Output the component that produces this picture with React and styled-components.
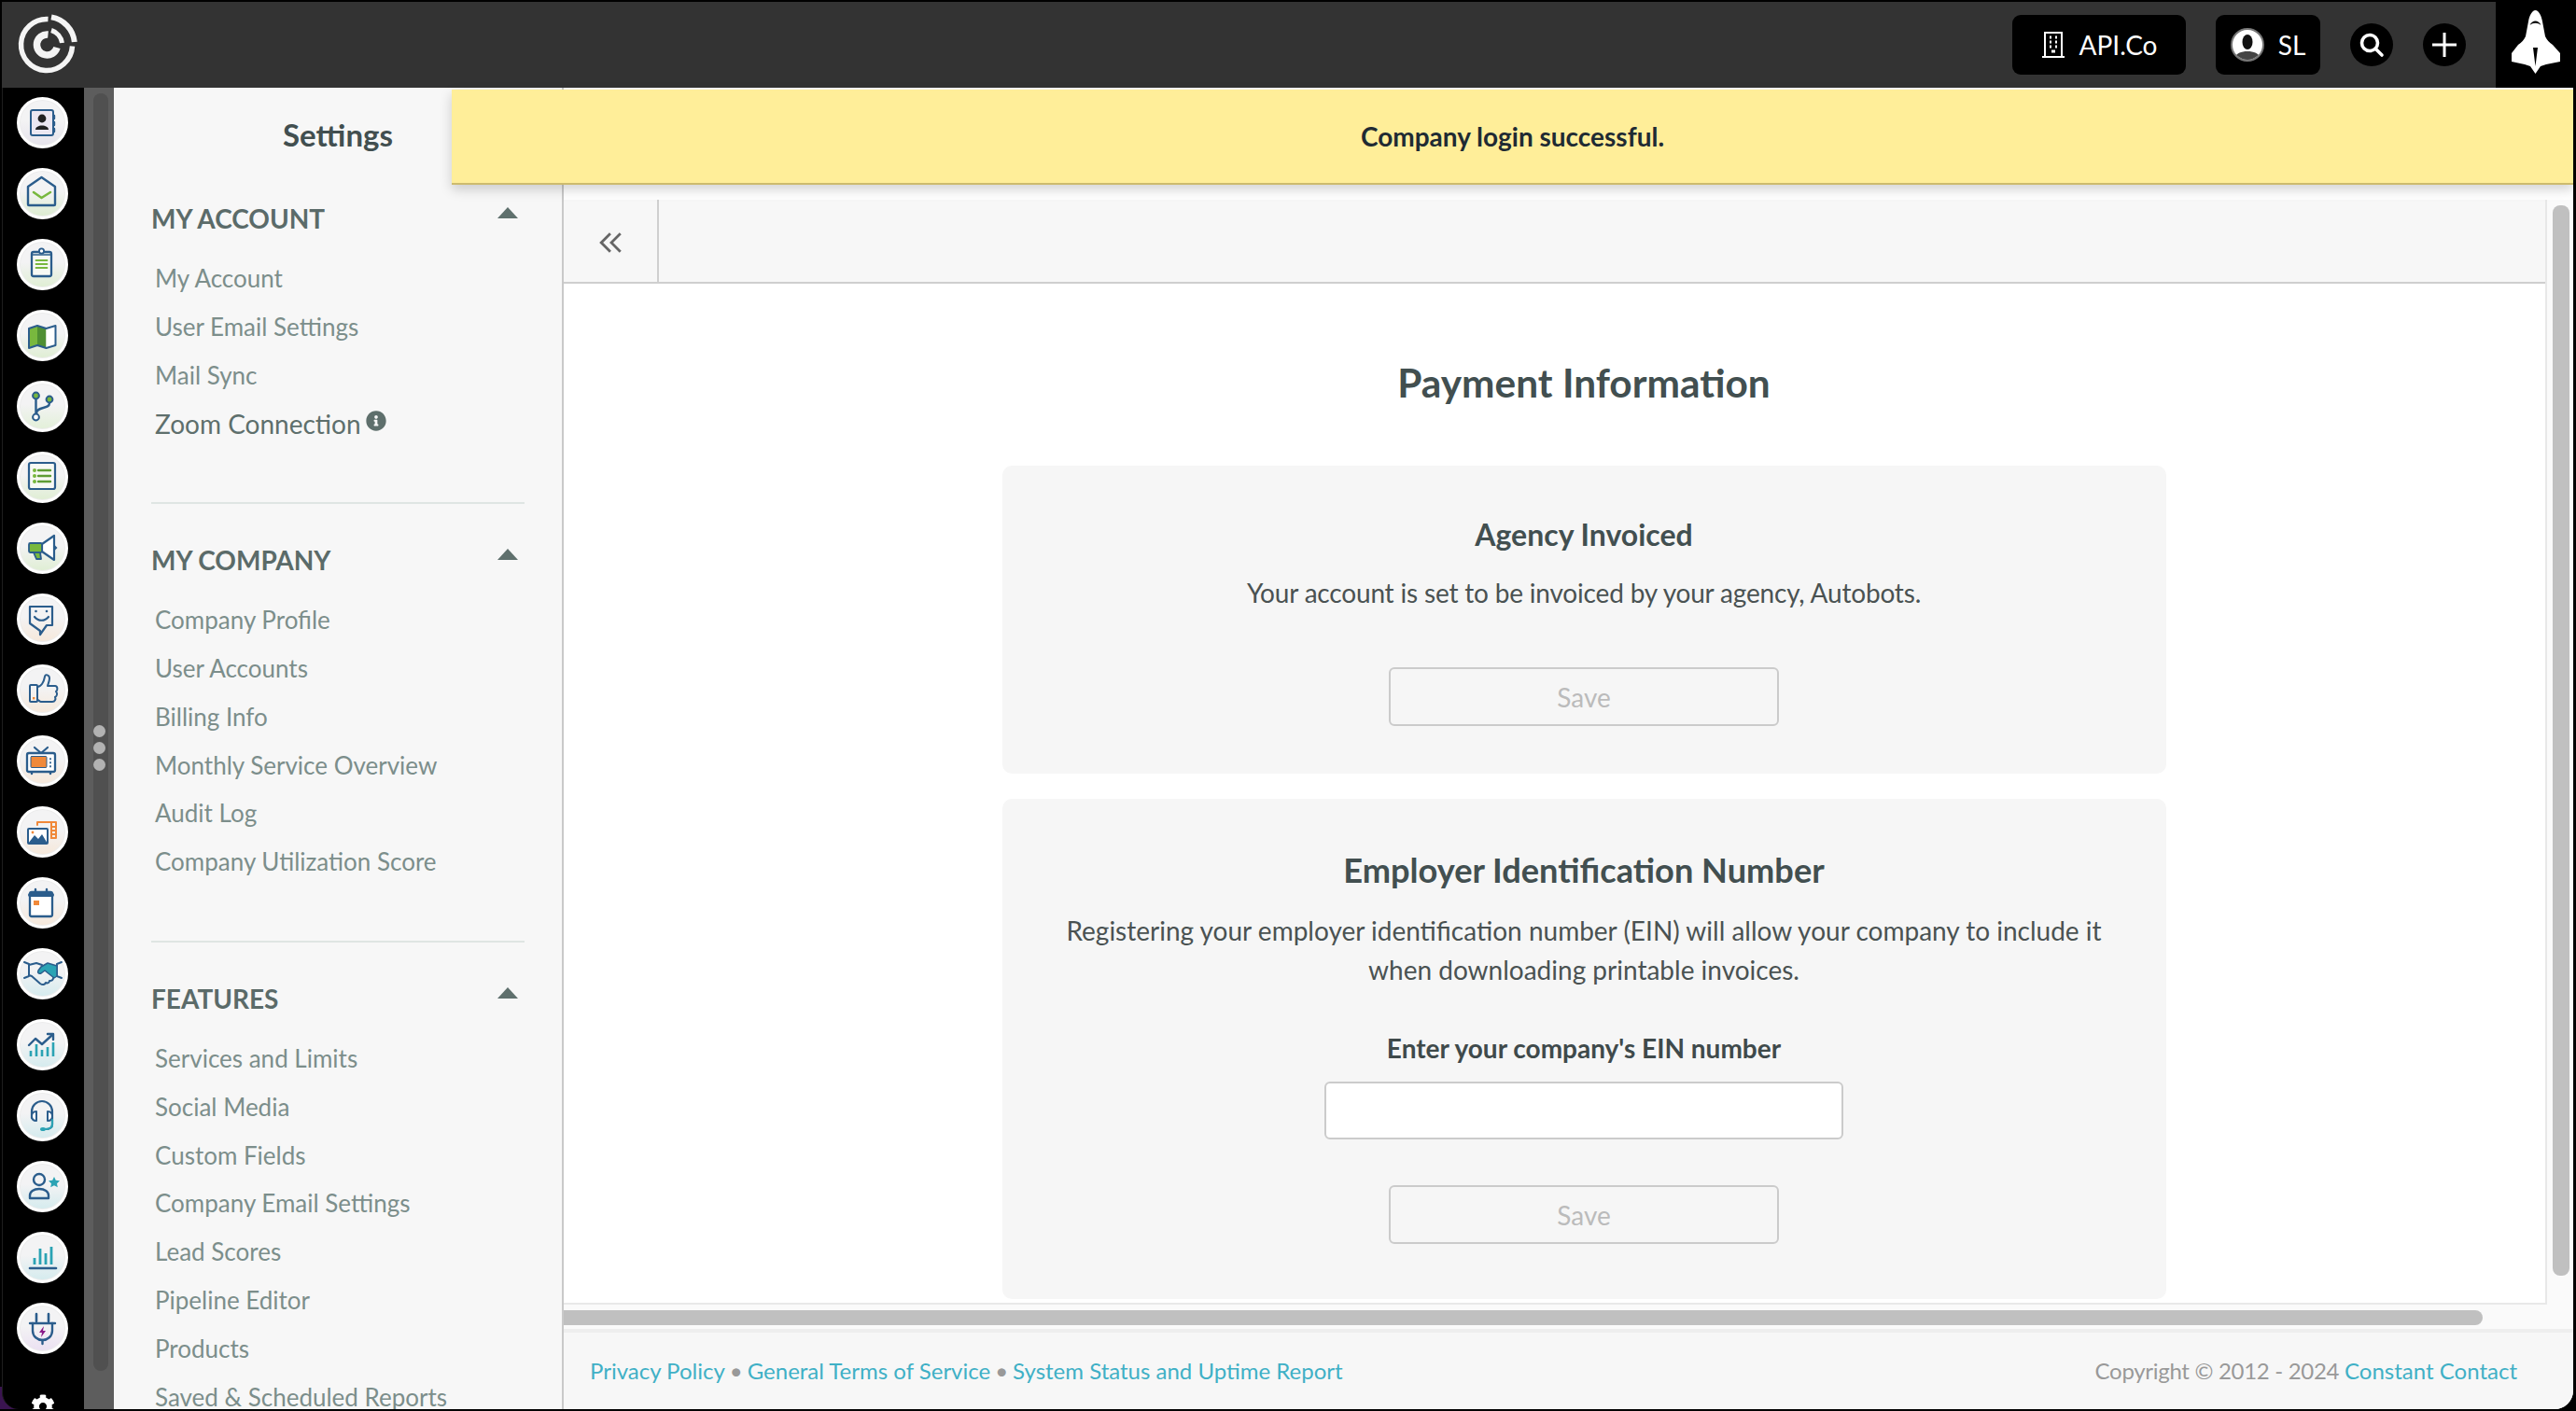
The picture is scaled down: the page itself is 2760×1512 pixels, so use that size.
import React from 'react'
import styled, { createGlobalStyle } from 'styled-components'
import { FaCog, FaInfoCircle } from 'react-icons/fa'

const GlobalStyle = createGlobalStyle`
html, body { margin: 0; padding: 0; background: #000; }
body { font-family: Lato, "Open Sans", sans-serif; }
* { box-sizing: border-box; }
`

const navy = '#2b5d8c'
const green = '#78b83e'
const orange = '#f0893a'
const teal = '#2ba3b4'

const Svg = ({ children }) => (
  <RailArt viewBox="0 0 55 55" width="55" height="55" fill="none" strokeLinecap="round" strokeLinejoin="round">
    <g transform="translate(2 2)">{children}</g>
  </RailArt>
)

const railIcons = [
  { tint: '#e6e3ec', art: (
    <>
      <rect x="13" y="12" width="24" height="27" rx="2" fill="#ebe7f1" stroke={navy} strokeWidth="2" />
      <path d="M38 18v3M38 25v3M38 32v3" stroke={navy} strokeWidth="2.4" />
      <circle cx="25" cy="21" r="4.4" fill="#222" />
      <path d="M18 33c0-6 14-6 14 0z" fill="#222" />
    </>
  ) },
  { tint: '#dcecd0', art: (
    <>
      <path d="M10 18 24.500 8 39 18v19a1 1 0 0 1-1 1H11a1 1 0 0 1-1-1z" stroke={navy} strokeWidth="2.400" />
      <path d="M16 24l8.500 6 9.500-6" stroke={green} strokeWidth="2.600" />
    </>
  ) },
  { tint: '#dfeed3', art: (
    <>
      <rect x="14" y="12" width="21" height="26" rx="2" fill="#f7f9f4" stroke={navy} strokeWidth="2.300" />
      <circle cx="24.500" cy="11" r="2.600" fill="#fff" stroke={navy} strokeWidth="1.800" />
      <path d="M14 15h21" stroke={navy} strokeWidth="1.500" />
      <path d="M18.500 21h12M18.500 25h12M18.500 29h12" stroke={green} strokeWidth="1.800" />
    </>
  ) },
  { tint: '#dfeed3', art: (
    <>
      <path d="M11 18l9-3v21l-9 3z" fill={green} />
      <path d="M20 15l9.500 3v21L20 36z" fill="#4f8f33" />
      <path d="M29.500 18l10-3v21l-10 3z" fill="#fff" />
      <path d="M11 18l9-3 9.500 3 10-3v21l-10 3-9.500-3-9 3z" stroke={navy} strokeWidth="2" />
    </>
  ) },
  { tint: '#e2f0d8', art: (
    <>
      <path d="M18.500 17v19M33 22c0 7-14 3-14 11" stroke={navy} strokeWidth="2.400" />
      <circle cx="18.500" cy="14" r="3.400" fill={green} stroke={navy} strokeWidth="2" />
      <circle cx="33" cy="18" r="3.400" fill={green} stroke={navy} strokeWidth="2" />
      <circle cx="18.500" cy="37" r="3.400" fill="#fff" stroke={navy} strokeWidth="2" />
    </>
  ) },
  { tint: '#dfeed3', art: (
    <>
      <rect x="11" y="10" width="28" height="28" rx="2" fill="#f7f9f4" stroke={navy} strokeWidth="2.200" />
      <circle cx="17" cy="18" r="2" fill={green} />
      <circle cx="17" cy="24" r="2" fill={green} />
      <circle cx="17" cy="30" r="2" fill={green} />
      <path d="M21 18h13M21 24h13M21 30h13" stroke="#5e9c34" strokeWidth="2.400" />
    </>
  ) },
  { tint: '#dfeed3', art: (
    <>
      <path d="M25 21 38 12v26l-13-9z" fill="#fff" stroke={navy} strokeWidth="2.200" />
      <path d="M39 22.500l2.500 2.500-2.500 2.500" fill={navy} />
      <rect x="11" y="20" width="14" height="10" rx="1.500" fill={green} stroke={navy} strokeWidth="1.800" />
      <path d="M16 30h7l1 7h-5z" fill={green} stroke={navy} strokeWidth="1.800" />
    </>
  ) },
  { tint: '#f6e8da', art: (
    <>
      <path d="M12 12h24v20h-6L23 42v-4l-11-8z" stroke={navy} strokeWidth="2.200" />
      <circle cx="18.500" cy="17" r="1.300" fill={navy} />
      <circle cx="30" cy="17" r="1.300" fill={navy} />
      <path d="M17 23c4 5 11 5 15 0" stroke={navy} strokeWidth="2.200" />
    </>
  ) },
  { tint: '#f6e8da', art: (
    <>
      <rect x="12" y="20" width="8" height="18" rx="1" stroke={navy} strokeWidth="2" />
      <rect x="15" y="33" width="2.400" height="2.400" fill={orange} />
      <path d="M20 22c4 0 7-5 8-11 .5-3 5-2 5 2 0 3-1.500 6-2 8h8c3 0 3 5 1 6 2 2 1 5-1 6 1 2 0 5-3 5H24c-2 0-2-2-4-2" stroke={navy} strokeWidth="2" />
    </>
  ) },
  { tint: '#f6e8da', art: (
    <>
      <path d="M17 11l7 6 7-6" stroke={navy} strokeWidth="2.200" />
      <rect x="9" y="17" width="30" height="20" rx="2" fill="#fff" stroke={navy} strokeWidth="2.300" />
      <rect x="13" y="20.500" width="17" height="12" rx="1" fill={orange} stroke={navy} strokeWidth="1" />
      <path d="M34 23v.5M34 27v.5M34 31v.5" stroke={navy} strokeWidth="1.800" />
      <path d="M14 38v1M34 38v1" stroke={navy} strokeWidth="2.400" />
    </>
  ) },
  { tint: '#f6e8da', art: (
    <>
      <path d="M20 18v-3h20v17h-5" stroke={orange} strokeWidth="2" />
      <path d="M35 15v17M35 20h5M35 24h5M35 28h5" stroke={orange} strokeWidth="2" />
      <rect x="10" y="22" width="21" height="16" rx="1" fill="#fff" stroke={navy} strokeWidth="2" />
      <path d="M10 38l7-9 4 4 4-5 6 10z" fill={navy} />
      <circle cx="15" cy="26" r="1.400" fill={orange} />
    </>
  ) },
  { tint: '#f6e8da', art: (
    <>
      <rect x="12" y="14" width="24" height="26" rx="2" fill="#fff" stroke={navy} strokeWidth="2.300" />
      <path d="M12 17h24" stroke={navy} strokeWidth="4" />
      <path d="M18 11v5M30 11v5" stroke={navy} strokeWidth="2.400" />
      <rect x="16" y="23" width="6" height="5" fill={orange} />
    </>
  ) },
  { tint: '#d4ebee', art: (
    <>
      <path d="M6 13l5 2v13l-5 2M46 13l-5 2v13l5 2" stroke={navy} strokeWidth="2" />
      <path d="M24 18l7-4 10 3v11l-3 2-10-8-4 3c-3 1-4-1-3-3z" fill={teal} stroke={navy} strokeWidth="1.500" />
      <path d="M11 16l8-2 6 2M11 27l3 1 9 8c3 2 5 1 6-1 2 1 4 0 4-2 2 0 4-1 4-3" stroke={navy} strokeWidth="2" />
    </>
  ) },
  { tint: '#d4ebee', art: (
    <>
      <path d="M11 26l7-7 7 6 11-10" stroke={navy} strokeWidth="2.400" />
      <path d="M31 14h6v6" stroke={navy} strokeWidth="2.400" />
      <path d="M13 32v6M19 25v13M25 31v7M31 28v10M37 23v15" stroke={teal} strokeWidth="2.600" strokeLinecap="butt" />
    </>
  ) },
  { tint: '#d4ebee', art: (
    <>
      <path d="M14 28v-7a11 11 0 0 1 22 0v14c0 3-3 5-7 5" stroke={navy} strokeWidth="2.200" />
      <path d="M19 21v10c-3 0-5-2-5-5s2-5 5-5zM31 21v10c3 0 5-2 5-5s-2-5-5-5z" fill="#fff" stroke={navy} strokeWidth="2" />
      <path d="M36 30v5c0 3-3 5-8 5" stroke={teal} strokeWidth="2.200" />
      <ellipse cx="26" cy="40" rx="3" ry="2" fill={teal} />
    </>
  ) },
  { tint: '#d4ebee', art: (
    <>
      <circle cx="22" cy="18" r="6" stroke={navy} strokeWidth="2.400" />
      <path d="M12 38v-3c0-4 4-7 10-7s10 3 10 7v3z" stroke={navy} strokeWidth="2.400" />
      <path d="M38 15l1.800 3.800 4.200.5-3 2.900.8 4.100-3.800-2-3.800 2 .8-4.100-3-2.900 4.200-.5z" fill={teal} />
    </>
  ) },
  { tint: '#d4ebee', art: (
    <>
      <path d="M17 26v7M23 16v17M29 21v12M35 14v19" stroke={teal} strokeWidth="2.800" strokeLinecap="butt" />
      <path d="M12 37h28" stroke={navy} strokeWidth="2.600" />
    </>
  ) },
  { tint: '#ebe0f2', art: (
    <>
      <path d="M19 10v8M32 10v8" stroke={navy} strokeWidth="2.600" />
      <path d="M12 20h27" stroke={navy} strokeWidth="2.400" />
      <path d="M15 20v8c0 6 5 10 10.500 10S36 34 36 28v-8" stroke={navy} strokeWidth="2.400" />
      <path d="M25.500 38v4" stroke={navy} strokeWidth="2.400" />
      <path d="M27 23l-5 7h3l-1 5 5-7h-3z" fill="#8a1d8a" />
    </>
  ) },
]

const menu = [
  {
    title: 'MY ACCOUNT',
    links: ['My Account', 'User Email Settings', 'Mail Sync'],
    extra: 'Zoom Connection',
  },
  {
    title: 'MY COMPANY',
    links: ['Company Profile', 'User Accounts', 'Billing Info', 'Monthly Service Overview', 'Audit Log', 'Company Utilization Score'],
  },
  {
    title: 'FEATURES',
    links: ['Services and Limits', 'Social Media', 'Custom Fields', 'Company Email Settings', 'Lead Scores', 'Pipeline Editor', 'Products', 'Saved & Scheduled Reports'],
  },
]

const Logo = () => (
  <svg viewBox="0 0 66 66" width="66" height="66" fill="none" stroke="#f4f4f4">
    <path d="M34.500 5.500A27.500 27.500 0 1 0 60.500 34.500" strokeWidth="5.500" />
    <path d="M38 3.400A30 30 0 0 1 62.800 30" strokeWidth="6" />
    <path d="M34.500 22A11 11 0 1 0 44 36" strokeWidth="7.500" />
    <path d="M38 17.500A16.500 16.500 0 0 1 49.500 31" strokeWidth="5" />
  </svg>
)

const BuildingIcon = () => (
  <svg viewBox="0 0 26 28" width="26" height="28" fill="none" stroke="#fff" strokeWidth="2">
    <rect x="4" y="1" width="18" height="26" />
    <path d="M1 27h24" />
    <path d="M9 6h2M15 6h2M9 11h2M15 11h2M9 16h2M15 16h2M11 21h4" strokeWidth="3" />
  </svg>
)

const Avatar = () => (
  <svg viewBox="0 0 36 36" width="36" height="36">
    <circle cx="18" cy="18" r="17" fill="#fff" stroke="#777" strokeWidth="2" />
    <clipPath id="avatarClip"><circle cx="18" cy="18" r="16" /></clipPath>
    <g clipPath="url(#avatarClip)">
      <ellipse cx="18" cy="15" rx="5.500" ry="8" fill="#111" />
      <path d="M3 36c1-9 8-11 15-11s14 2 15 11z" fill="#444" />
    </g>
  </svg>
)

const SearchIcon = () => (
  <svg viewBox="0 0 28 28" width="28" height="28" fill="none" stroke="#fff" strokeLinecap="round">
    <circle cx="12" cy="12" r="8.500" strokeWidth="3.600" />
    <path d="M18.500 18.500 25 25" strokeWidth="3.600" />
  </svg>
)

const PlusIcon = () => (
  <svg viewBox="0 0 26 26" width="26" height="26" stroke="#fff" strokeWidth="3">
    <path d="M13 0v26M0 13h26" />
  </svg>
)

const Shuttle = () => (
  <svg viewBox="0 0 52 68" width="52" height="68">
    <path d="M25.500 0C29 0 32 6 33 12L36 28C38 32 40 34 44 37L52 46V55L37 58L31 60L25.500 68L20 60L14 58L0 55V46L7 37C11 34 13 32 15 28L18 12C19 6 22 0 25.500 0Z" fill="#fff" />
    <path d="M19.500 16C22 10 29 10 31.500 16C28 13 23 13 19.500 16Z" fill="#000" />
    <path d="M23 40H28L25.500 60Z" fill="#000" />
  </svg>
)

const Chevrons = () => (
  <svg viewBox="0 0 24 22" width="26" height="24" fill="none" stroke="#666" strokeWidth="2.600">
    <path d="M11 2 2 11l9 9M21 2l-9 9 9 9" />
  </svg>
)

const App = () => {
  return (
    <Page>
      <GlobalStyle />
      <TopBar>
        <LogoCell><Logo /></LogoCell>
        <TopActions>
          <Pill $width={186}><BuildingIcon /><span>API.Co</span></Pill>
          <Pill $width={112}><Avatar /><span>SL</span></Pill>
          <RoundButton><SearchIcon /></RoundButton>
          <RoundButton><PlusIcon /></RoundButton>
        </TopActions>
        <RocketCell><Shuttle /></RocketCell>
      </TopBar>
      <Body>
        <Toast>Company login successful.</Toast>
        <RailWell>
          <Rail>
            {railIcons.map((icon, i) => (
              <RailButton key={i} $tint={icon.tint}><Svg>{icon.art}</Svg></RailButton>
            ))}
            <Gear><FaCog size={26} /></Gear>
          </Rail>
        </RailWell>
        <RailGutter>
          <GutterThumb />
          <GripDots><i /><i /><i /></GripDots>
        </RailGutter>
        <Sidebar>
          <SidebarTitle>Settings</SidebarTitle>
          {menu.map((section) => (
            <Section key={section.title}>
              <SectionHead>
                <span>{section.title}</span>
                <Caret />
              </SectionHead>
              <LinkList>
                {section.links.map((link) => <MenuLink key={link}>{link}</MenuLink>)}
                {section.extra && (
                  <MenuLink $strong>{section.extra}<InfoDot><FaInfoCircle size={22} /></InfoDot></MenuLink>
                )}
              </LinkList>
            </Section>
          ))}
        </Sidebar>
        <Main>
          <ScrollRow>
            <Viewport>
              <Inner>
                <Toolbar><BackCell><Chevrons /></BackCell></Toolbar>
                <PageTitle>Payment Information</PageTitle>
                <Card $top={52} $bottom={51}>
                  <CardTitle>Agency Invoiced</CardTitle>
                  <CardText $tight>Your account is set to be invoiced by your agency, Autobots.</CardText>
                  <SaveButton $gap={59}>Save</SaveButton>
                </Card>
                <Card $top={52} $bottom={59}>
                  <CardTitle $large>Employer Identification Number</CardTitle>
                  <CardText>Registering your employer identification number (EIN) will allow your company to include it when downloading printable invoices.</CardText>
                  <FieldLabel>Enter your company's EIN number</FieldLabel>
                  <EinInput />
                  <SaveButton $gap={49}>Save</SaveButton>
                </Card>
              </Inner>
            </Viewport>
            <VTrack><VThumb /></VTrack>
          </ScrollRow>
          <HTrack><HThumb /></HTrack>
          <Footer>
            <FooterLinks>
              <a>Privacy Policy</a><b>•</b><a>General Terms of Service</a><b>•</b><a>System Status and Uptime Report</a>
            </FooterLinks>
            <Copyright>Copyright © 2012 - 2024 <a>Constant Contact</a></Copyright>
          </Footer>
        </Main>
      </Body>
    </Page>
  )
}

const Page = styled.div`
width: 2760px;
height: 1512px;
padding: 2px 0 2px 0;
background: #000;
display: flex;
flex-direction: column;
overflow: hidden;
`

const TopBar = styled.header`
height: 92px;
flex: none;
margin-left: 2px;
background: #333;
display: flex;
align-items: center;
`

const LogoCell = styled.div`
width: 88px;
padding-left: 15px;
display: flex;
align-items: center;
`

const TopActions = styled.div`
flex: 1;
display: flex;
align-items: center;
justify-content: flex-end;
padding-right: 32px;
gap: 32px;
`

const Pill = styled.div`
width: ${(p) => p.$width}px;
height: 64px;
background: #000;
border-radius: 9px;
color: #fff;
font-size: 28px;
display: flex;
align-items: center;
justify-content: center;
gap: 15px;
`

const RoundButton = styled.div`
width: 46px;
height: 46px;
border-radius: 50%;
background: #000;
display: flex;
align-items: center;
justify-content: center;
`

const RocketCell = styled.div`
width: 86px;
height: 92px;
background: #000;
padding: 9px 0 0 17px;
`

const Body = styled.div`
flex: 1;
min-height: 0;
position: relative;
display: flex;
`

const Toast = styled.div`
position: absolute;
left: 484px;
right: 3px;
top: 2px;
height: 102px;
background: #ffee99;
border-bottom: 2px solid #cdbb6e;
box-shadow: 0 5px 12px rgba(0, 0, 0, 0.18);
color: #1f2b33;
font-size: 28px;
font-weight: 700;
display: flex;
align-items: center;
justify-content: center;
z-index: 5;
`

const RailWell = styled.div`
width: 90px;
flex: none;
background: linear-gradient(to top, #3a1450 24px, #000 24px);
`

const Rail = styled.nav`
height: 100%;
background: #000;
border-left: 1px solid #1e1e1e;
margin-left: 2px;
border-bottom-left-radius: 18px;
padding: 10px 0 0 15px;
display: flex;
flex-direction: column;
gap: 21px;
overflow: hidden;
`

const RailButton = styled.div`
width: 55px;
height: 55px;
flex: none;
border-radius: 50%;
border: 3px solid #fff;
background: linear-gradient(to bottom, #f3f3f4 45%, ${(p) => p.$tint} 100%);
box-shadow: inset 0 0 0 1px #ececec;
display: flex;
align-items: center;
justify-content: center;
`

const RailArt = styled.svg`
flex: none;
`

const Gear = styled.div`
width: 55px;
color: #fff;
display: flex;
justify-content: center;
margin-top: 22px;
flex: none;
`

const RailGutter = styled.div`
width: 32px;
flex: none;
background: #5d5d5d;
padding: 6px 6px 41px 10px;
position: relative;
`

const GutterThumb = styled.div`
height: 100%;
background: #505050;
border-radius: 8px;
`

const GripDots = styled.div`
position: absolute;
left: 10px;
top: 683px;
display: flex;
flex-direction: column;
gap: 5px;

i {
  display: block;
  width: 13px;
  height: 13px;
  border-radius: 50%;
  background: #b2b2b2;
}
`

const Sidebar = styled.aside`
width: 482px;
flex: none;
background: #f7f7f7;
border-right: 2px solid #c9c9c9;
overflow: hidden;
`

const SidebarTitle = styled.h2`
margin: 0;
height: 80px;
padding-top: 20px;
line-height: 60px;
text-align: center;
font-size: 33px;
font-weight: 700;
color: #424f50;
`

const Section = styled.section`
margin: 0 40px;
padding: 38px 0 58px;
border-bottom: 2px solid #dfe5e3;

&:last-child {
  border-bottom: 0;
}
`

const SectionHead = styled.div`
height: 44px;
display: flex;
align-items: center;
justify-content: space-between;
padding-right: 7px;
color: #5b6b69;
font-size: 28px;
font-weight: 700;
`

const Caret = styled.span`
width: 0;
height: 0;
margin-bottom: 12px;
border-left: 11px solid transparent;
border-right: 11px solid transparent;
border-bottom: 12px solid #5f706d;
`

const LinkList = styled.div`
margin-top: 17px;
display: flex;
flex-direction: column;
`

const MenuLink = styled.a`
height: 51.8px;
line-height: ${(p) => (p.$strong ? 53.8 : 51.8)}px;
padding-left: 4px;
font-size: ${(p) => (p.$strong ? 28 : 26)}px;
color: ${(p) => (p.$strong ? '#5e6f6c' : '#7c8e8b')};
white-space: nowrap;
`

const InfoDot = styled.span`
display: inline-block;
margin-left: 5px;
position: relative;
top: -3px;
line-height: 0;
color: #5e6f6c;
`

const Main = styled.main`
flex: 1;
min-width: 0;
margin-right: 3px;
background: #fff;
padding-top: 120px;
display: flex;
flex-direction: column;
border-bottom-right-radius: 20px;
overflow: hidden;
`

const ScrollRow = styled.div`
flex: 1;
min-height: 0;
display: flex;
`

const Viewport = styled.div`
flex: 1;
min-width: 0;
overflow: hidden;
border-bottom: 2px solid #e8e8e8;
border-right: 2px solid #e8e8e8;
`

const Inner = styled.div`
width: 2186px;
display: flex;
flex-direction: column;
align-items: center;
`

const Toolbar = styled.div`
align-self: stretch;
height: 90px;
background: #f7f7f7;
border-bottom: 2px solid #cfcfcf;
`

const BackCell = styled.div`
width: 102px;
height: 100%;
padding: 4px 0 0 2px;
border-right: 2px solid #cfcfcf;
display: flex;
align-items: center;
justify-content: center;
`

const PageTitle = styled.h1`
margin: 76px 0 59px;
line-height: 60px;
font-size: 42.4px;
font-weight: 700;
color: #424f50;
`

const Card = styled.section`
width: 1247px;
background: #f6f6f6;
border-radius: 10px;
padding: ${(p) => p.$top}px 0 ${(p) => p.$bottom}px;
margin-bottom: 27px;
display: flex;
flex-direction: column;
align-items: center;
text-align: center;
`

const CardTitle = styled.h3`
margin: 0 0 ${(p) => (p.$large ? 20 : 19)}px;
line-height: ${(p) => (p.$large ? 48 : 44)}px;
font-size: ${(p) => (p.$large ? 36.2 : 32)}px;
font-weight: 700;
color: #424f50;
`

const CardText = styled.p`
margin: 0;
max-width: 1150px;
line-height: 42px;
font-size: 28px;
letter-spacing: ${(p) => (p.$tight ? '-0.18px' : '0')};
color: #4a5252;
`

const SaveButton = styled.button`
width: 418px;
height: 63px;
margin-top: ${(p) => p.$gap}px;
background: transparent;
border: 2px solid #cbcbcb;
border-radius: 6px;
color: #bbb;
font: 400 28px Lato, sans-serif;
`

const FieldLabel = styled.label`
margin-top: 43px;
line-height: 40px;
font-size: 28px;
font-weight: 700;
color: #3f4a4b;
`

const EinInput = styled.input`
width: 556px;
height: 62px;
margin-top: 16px;
background: #fff;
border: 2px solid #cbcbcb;
border-radius: 6px;
`

const VTrack = styled.div`
width: 28px;
flex: none;
background: #fafafa;
padding: 6px 4px 0 6px;
`

const VThumb = styled.div`
height: 1147px;
background: #c0c0c0;
border-radius: 8px;
`

const HTrack = styled.div`
height: 30px;
flex: none;
background: #fafafa;
border-bottom: 4px solid #eee;
padding-top: 6px;
`

const HThumb = styled.div`
width: 2056px;
height: 16px;
background: #c0c0c0;
border-radius: 0 8px 8px 0;
`

const Footer = styled.footer`
height: 82px;
flex: none;
background: #f7f7f7;
padding: 0 60px 2px 28px;
display: flex;
align-items: center;
justify-content: space-between;
font-size: 24px;
color: #999;

a {
  color: #3fb0c6;
}
`

const FooterLinks = styled.div`
b {
  margin: 0 5px;
  font-weight: 400;
  color: #999;
}
`

const Copyright = styled.div`
letter-spacing: -0.3px;

a {
  letter-spacing: 0;
}
`

export default App
